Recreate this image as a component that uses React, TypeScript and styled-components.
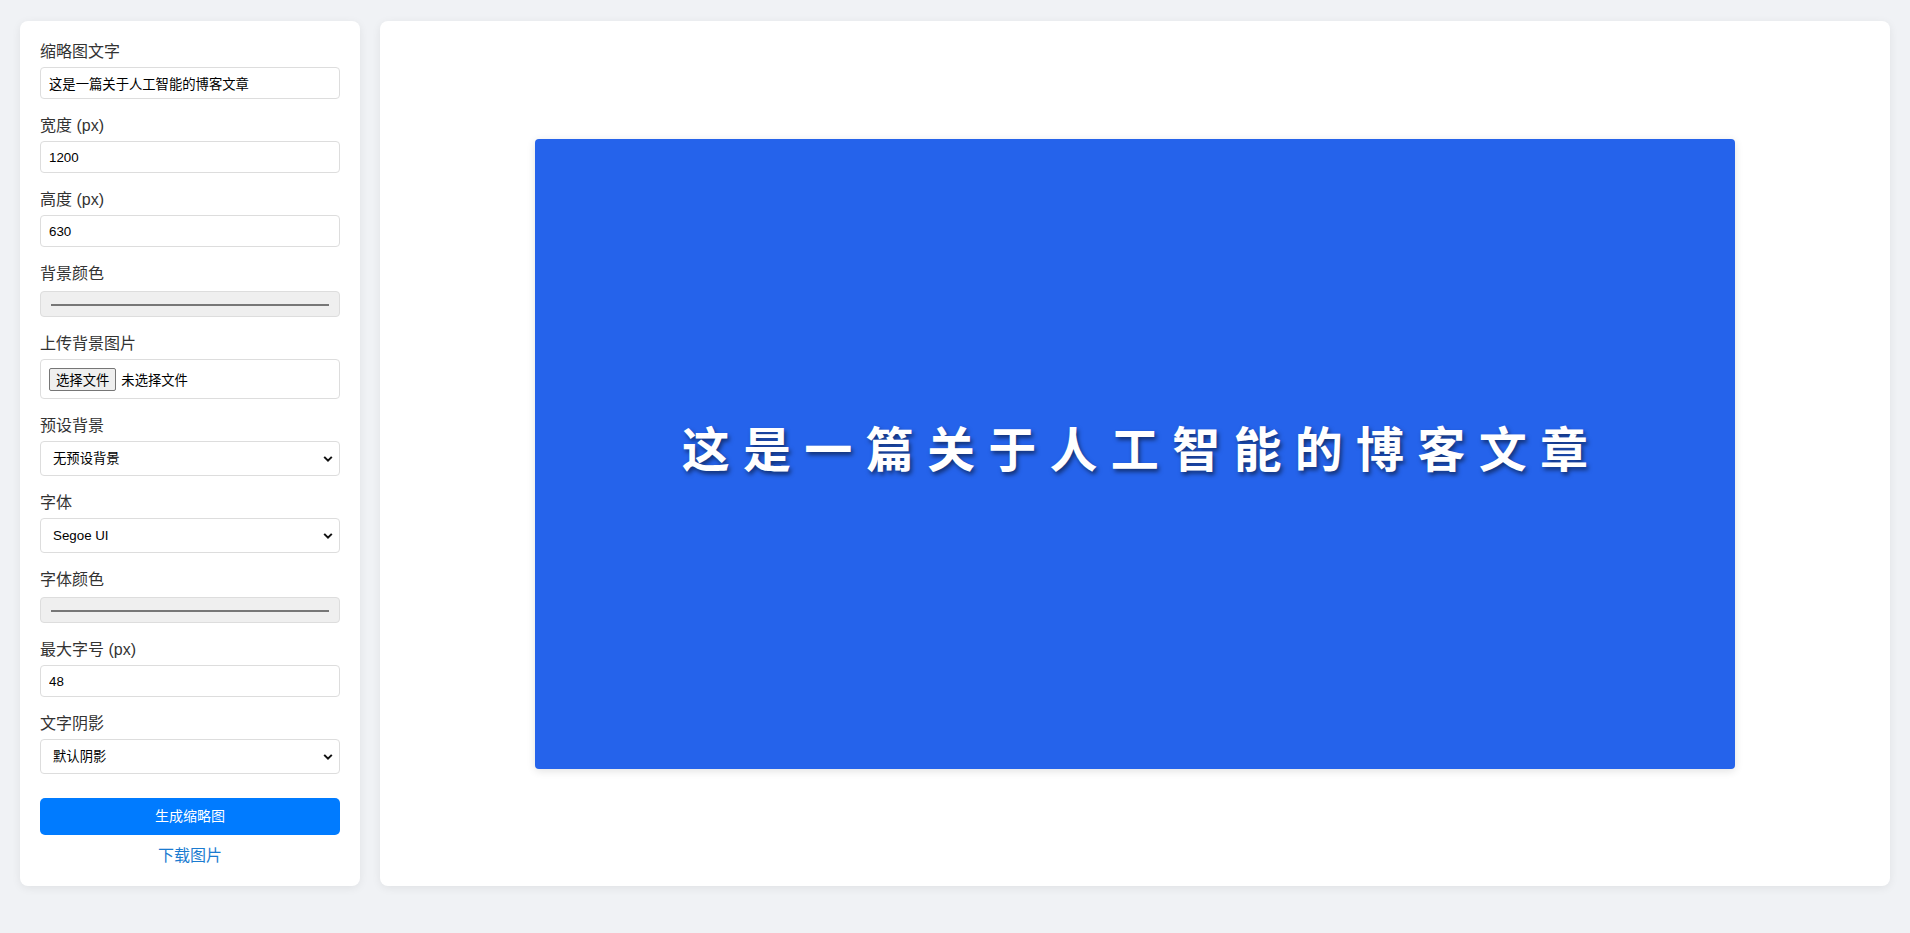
import styled, { createGlobalStyle } from "styled-components";

const GlobalStyle = createGlobalStyle`
  html, body {
    margin: 0;
    padding: 0;
    background-color: #f0f2f5;
  }

  body {
    font-family: "Segoe UI", "Liberation Sans", "Noto Sans CJK SC", sans-serif;
    color: #333;
  }
`;

const Page = styled.div`
  display: flex;
  align-items: stretch;
  gap: 20px;
  padding: 21px 20px 20px 20px;
`;

const Sidebar = styled.aside`
  width: 340px;
  flex-shrink: 0;
  box-sizing: border-box;
  padding: 20px;
  background-color: #ffffff;
  border-radius: 8px;
  box-shadow: 0px 2px 10px rgba(0, 0, 0, 0.07);
`;

const Field = styled.div`
  margin-bottom: 16px;
`;

const Label = styled.label`
  display: block;
  font-size: 16px;
  line-height: 21px;
  margin-bottom: 5px;
  color: #333;
`;

const TextInput = styled.input`
  display: block;
  width: 100%;
  height: 32px;
  box-sizing: border-box;
  padding: 8px;
  border: 1px solid #ddd;
  border-radius: 4px;
  font-family: "Liberation Sans", "Noto Sans CJK SC", sans-serif;
  font-size: 13.33px;
  color: #000;
  background: #fff;
  outline: none;
`;

// collapses with the label's 5px margin, so 7px is the real gap
const ColorInput = styled.input`
  display: block;
  width: 100%;
  height: 26px;
  margin-top: 7px;
  box-sizing: border-box;
  padding: 8px;
  border: 1px solid #ddd;
  border-radius: 4px;
  background-color: #efefef;
  cursor: pointer;

  &::-webkit-color-swatch-wrapper {
    padding: 4px 2px;
  }

  &::-webkit-color-swatch {
    border: 1px solid #777;
    border-radius: 0;
  }
`;

const FileBox = styled.label`
  display: flex;
  align-items: center;
  gap: 5px;
  height: 40px;
  box-sizing: border-box;
  padding: 8px;
  border: 1px solid #ddd;
  border-radius: 4px;
  font-family: "Liberation Sans", "Noto Sans CJK SC", sans-serif;
  font-size: 13.33px;
  color: #000;
  cursor: pointer;

  input {
    display: none;
  }
`;

const FileButton = styled.span`
  display: inline-flex;
  align-items: center;
  height: 23px;
  box-sizing: border-box;
  padding: 0 6px;
  border: 1px solid #767676;
  border-radius: 2px;
  background-color: #efefef;
`;

const SelectWrap = styled.div`
  position: relative;

  svg {
    position: absolute;
    right: 7px;
    top: 50%;
    transform: translateY(-50%);
    pointer-events: none;
  }
`;

const Select = styled.select`
  display: block;
  width: 100%;
  height: 35px;
  box-sizing: border-box;
  padding: 8px 24px 8px 12px;
  border: 1px solid #ddd;
  border-radius: 4px;
  appearance: none;
  background: #fff;
  font-family: "Liberation Sans", "Noto Sans CJK SC", sans-serif;
  font-size: 13.33px;
  color: #000;
  outline: none;
`;

// margin collapses with the field's 16px, so this is the real gap
const Button = styled.button`
  display: block;
  width: 100%;
  margin-top: 24px;
  padding: 10px;
  border: none;
  border-radius: 5px;
  background-color: #007bff;
  color: white;
  font-family: "Segoe UI", "Liberation Sans", "Noto Sans CJK SC", sans-serif;
  font-size: 14px;
  line-height: 17px;
  cursor: pointer;

  &:hover {
    background-color: #0069d9;
  }
`;

const DownloadLink = styled.a`
  display: block;
  margin-top: 10px;
  text-align: center;
  font-size: 16px;
  line-height: 21px;
  color: #1b7bd0;
  text-decoration: none;
  cursor: pointer;
`;

const Preview = styled.main`
  flex: 1;
  display: flex;
  align-items: center;
  justify-content: center;
  background-color: #ffffff;
  border-radius: 8px;
  box-shadow: 0px 2px 10px rgba(0, 0, 0, 0.07);
`;

const Thumb = styled.div<{ $bg: string }>`
  width: 1200px;
  height: 630px;
  flex-shrink: 0;
  display: flex;
  align-items: center;
  justify-content: center;
  background-color: ${(p) => p.$bg};
  border-radius: 4px;
  box-shadow: 0px 2px 8px rgba(0, 0, 0, 0.12);
`;

const ThumbText = styled.div<{ $color: string; $size: number }>`
  font-family: "Noto Sans CJK SC", "Liberation Sans", sans-serif;
  font-weight: 700;
  font-size: ${(p) => p.$size}px;
  line-height: 1;
  letter-spacing: 13.3px;
  padding-left: 13px;
  margin-bottom: 15px;
  color: ${(p) => p.$color};
  text-shadow: 2px 3px 4px rgba(0, 0, 0, 0.5);
`;

const Chevron = () => (
  <svg width="10" height="7" viewBox="0 0 10 7" fill="none">
    <path d="M1.2 1.4 L5 5.2 L8.8 1.4" stroke="#111" strokeWidth="2" />
  </svg>
);

const App = () => {
  const text = "这是一篇关于人工智能的博客文章";
  const bg = "#2563eb";

  return (
    <>
      <GlobalStyle />
      <Page>
        <Sidebar>
          <Field>
            <Label>缩略图文字</Label>
            <TextInput type="text" defaultValue={text} />
          </Field>
          <Field>
            <Label>宽度 (px)</Label>
            <TextInput type="text" defaultValue="1200" />
          </Field>
          <Field>
            <Label>高度 (px)</Label>
            <TextInput type="text" defaultValue="630" />
          </Field>
          <Field>
            <Label>背景颜色</Label>
            <ColorInput type="color" defaultValue={bg} />
          </Field>
          <Field>
            <Label>上传背景图片</Label>
            <FileBox>
              <input type="file" accept="image/*" />
              <FileButton>选择文件</FileButton>
              <span>未选择文件</span>
            </FileBox>
          </Field>
          <Field>
            <Label>预设背景</Label>
            <SelectWrap>
              <Select defaultValue="none">
                <option value="none">无预设背景</option>
              </Select>
              <Chevron />
            </SelectWrap>
          </Field>
          <Field>
            <Label>字体</Label>
            <SelectWrap>
              <Select defaultValue="segoe">
                <option value="segoe">Segoe UI</option>
              </Select>
              <Chevron />
            </SelectWrap>
          </Field>
          <Field>
            <Label>字体颜色</Label>
            <ColorInput type="color" defaultValue="#ffffff" />
          </Field>
          <Field>
            <Label>最大字号 (px)</Label>
            <TextInput type="text" defaultValue="48" />
          </Field>
          <Field>
            <Label>文字阴影</Label>
            <SelectWrap>
              <Select defaultValue="default">
                <option value="default">默认阴影</option>
              </Select>
              <Chevron />
            </SelectWrap>
          </Field>
          <Button>生成缩略图</Button>
          <DownloadLink>下载图片</DownloadLink>
        </Sidebar>

        <Preview>
          <Thumb $bg={bg}>
            <ThumbText $color="#ffffff" $size={48}>
              {text}
            </ThumbText>
          </Thumb>
        </Preview>
      </Page>
    </>
  );
};

export default App;
